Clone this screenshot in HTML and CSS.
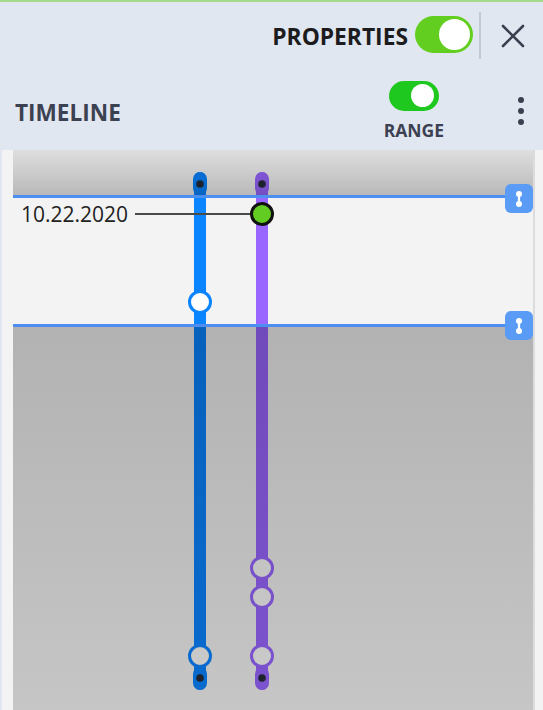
FILE: index.html
```html
<!DOCTYPE html>
<html>
<head>
<meta charset="utf-8">
<link rel="stylesheet" href="styles.css">
</head>
<body>
<div class="app">
  <header class="topbar">
    <span class="props-label">PROPERTIES</span>
    <span class="toggle toggle-lg"><span class="knob"></span></span>
    <span class="sep"></span>
    <button class="icon-btn close" aria-label="Close">
      <svg width="24" height="24" viewBox="0 0 24 24"><path d="M2 2 L22 22 M22 2 L2 22" stroke="#3b4050" stroke-width="2.6" stroke-linecap="round" fill="none"/></svg>
    </button>
  </header>
  <div class="titlebar">
    <h2 class="title">TIMELINE</h2>
    <div class="range">
      <span class="toggle toggle-sm"><span class="knob"></span></span>
      <span class="range-label">RANGE</span>
    </div>
    <button class="icon-btn kebab" aria-label="More">
      <svg width="8" height="30" viewBox="0 0 8 30"><circle cx="4" cy="4" r="3" fill="#3b4050"/><circle cx="4" cy="15" r="3" fill="#3b4050"/><circle cx="4" cy="26" r="3" fill="#3b4050"/></svg>
    </button>
  </div>
  <div class="panel">
    <div class="canvas">
      <svg class="tracks" width="520" height="570" viewBox="0 0 520 570">
        <line x1="187" y1="28" x2="187" y2="534" stroke="#0a84ff" stroke-width="12" stroke-linecap="round"/>
        <rect x="180" y="22" width="14" height="23" rx="7" fill="#0a84ff"/>
        <rect x="180" y="517" width="14" height="23" rx="7" fill="#0a84ff"/>
        <circle cx="187" cy="34" r="3.8" fill="#262b38"/>
        <circle cx="187" cy="528" r="3.8" fill="#262b38"/>

        <line x1="249" y1="28" x2="249" y2="534" stroke="#9966ff" stroke-width="12" stroke-linecap="round"/>
        <rect x="242" y="22" width="14" height="23" rx="7" fill="#9966ff"/>
        <rect x="242" y="517" width="14" height="23" rx="7" fill="#9966ff"/>
        <circle cx="249" cy="34" r="3.8" fill="#262b38"/>
        <circle cx="249" cy="528" r="3.8" fill="#262b38"/>

        <line x1="122" y1="64" x2="238" y2="64" stroke="#4a4a4a" stroke-width="2"/>
        <circle cx="249" cy="64" r="10.5" fill="#62cc22" stroke="#111" stroke-width="3"/>
        <circle cx="187" cy="152" r="10.5" fill="#fff" stroke="#0a84ff" stroke-width="3"/>

        <circle cx="249" cy="418" r="10.5" fill="#fafafa" stroke="#9966ff" stroke-width="3"/>
        <circle cx="249" cy="447" r="10.5" fill="#fafafa" stroke="#9966ff" stroke-width="3"/>
        <circle cx="249" cy="506" r="10.5" fill="#fafafa" stroke="#9966ff" stroke-width="3"/>
        <circle cx="187" cy="506" r="10.5" fill="#fafafa" stroke="#0a84ff" stroke-width="3"/>
      </svg>
      <div class="shade shade-top"></div>
      <div class="shade shade-bottom"></div>
      <div class="range-line line-top"></div>
      <div class="range-line line-bottom"></div>
      <div class="handle handle-top"><svg width="8" height="18" viewBox="0 0 8 18"><line x1="4" y1="4" x2="4" y2="14" stroke="#fff" stroke-width="2.2"/><circle cx="4" cy="4" r="3" fill="#fff"/><circle cx="4" cy="14" r="3" fill="#fff"/></svg></div>
      <div class="handle handle-bottom"><svg width="8" height="18" viewBox="0 0 8 18"><line x1="4" y1="4" x2="4" y2="14" stroke="#fff" stroke-width="2.2"/><circle cx="4" cy="4" r="3" fill="#fff"/><circle cx="4" cy="14" r="3" fill="#fff"/></svg></div>
      <span class="date-label">10.22.2020</span>
    </div>
  </div>
</div>
</body>
</html>
```

FILE: styles.css
```css
html, body {
  margin: 0;
  padding: 0;
}
body {
  background: #e1e7f0;
  font-family: "Open Sans", "Noto Sans", sans-serif;
  width: 543px;
  height: 710px;
  overflow: hidden;
}
.app {
  display: flex;
  flex-direction: column;
}
.topbar {
  display: flex;
  justify-content: flex-end;
  align-items: center;
  height: 68px;
  border-top: 2px solid #a6d98c;
  padding-right: 18px;
}
.props-label {
  font-size: 22.8px;
  font-weight: 700;
  color: #1c1c1e;
  margin-right: 7px;
  line-height: 1;
  margin-top: 2px;
}
.toggle {
  position: relative;
  display: inline-block;
  border-radius: 999px;
}
.toggle .knob {
  position: absolute;
  background: #fff;
  border-radius: 50%;
}
.toggle-lg {
  width: 58px;
  height: 37px;
  background: #62cf20;
  margin-top: -3px;
}
.toggle-lg .knob {
  width: 31px;
  height: 31px;
  top: 3px;
  right: 3px;
}
.sep {
  width: 2px;
  height: 47px;
  background: #c4cad4;
  margin-left: 6px;
  margin-right: 20px;
  margin-top: -2px;
}
.icon-btn {
  border: 0;
  background: none;
  padding: 0;
  display: flex;
  align-items: center;
  justify-content: center;
}
.close {
  width: 24px;
  height: 24px;
}
.titlebar {
  display: flex;
  align-items: center;
  height: 80px;
  padding-left: 15px;
  padding-right: 10px;
}
.title {
  flex: 1;
  margin: 6px 0 0 0;
  font-size: 22.6px;
  font-weight: 700;
  color: #3c4152;
  line-height: 1;
}
.range {
  display: flex;
  flex-direction: column;
  align-items: center;
  gap: 9px;
}
.toggle-sm {
  width: 50px;
  height: 30px;
  background: #1ec81e;
}
.toggle-sm .knob {
  width: 23px;
  height: 23px;
  top: 3.5px;
  right: 5px;
}
.range-label {
  font-size: 17.5px;
  font-weight: 700;
  color: #3c4152;
  line-height: 20px;
}
.kebab {
  width: 24px;
  height: 32px;
  margin-left: 65px;
  margin-top: 2px;
}
.panel {
  background: #f3f3f3;
  margin-left: 2px;
  padding-left: 11px;
  padding-right: 8px;
  height: 580px;
}
.canvas {
  position: relative;
  width: 520px;
  height: 570px;
  background: #f3f3f3;
  border-right: 2px solid #dcdcdc;
  overflow: hidden;
}
.tracks {
  position: absolute;
  left: 0;
  top: 0;
}
.shade {
  position: absolute;
  left: 0;
  right: 0;
}
.shade-top {
  top: 0;
  height: 46px;
  background: linear-gradient(to bottom, rgba(0,0,0,0.085), rgba(0,0,0,0.245));
}
.shade-bottom {
  top: 177px;
  bottom: 0;
  background: linear-gradient(to bottom, rgba(0,0,0,0.265), rgba(0,0,0,0.185));
}
.range-line {
  position: absolute;
  left: 0;
  width: 494px;
  height: 3px;
  background: #4d8ff0;
}
.line-top { top: 45px; }
.line-bottom { top: 174px; }
.handle {
  position: absolute;
  left: 492px;
  width: 28px;
  height: 29px;
  border-radius: 6px;
  background: #5a9bf5;
  display: flex;
  align-items: center;
  justify-content: center;
}
.handle-top { top: 34px; }
.handle-bottom { top: 161px; }
.date-label {
  position: absolute;
  left: 8px;
  top: 51px;
  font-size: 21px;
  line-height: 26px;
  color: #222;
}
```
